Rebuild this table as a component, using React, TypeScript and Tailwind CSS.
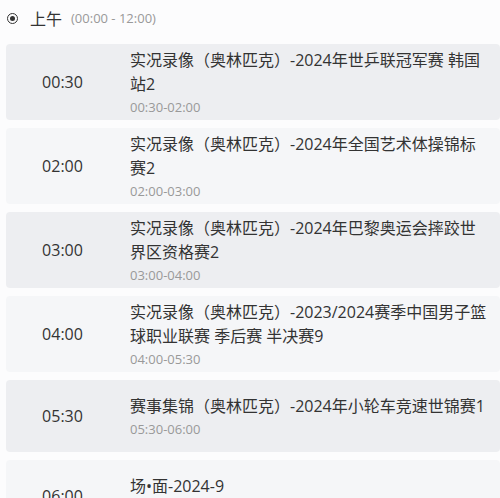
import React from 'react';

type Program = {
    time: string;
    title: string;
    range: string;
    shade: boolean;
};

const programs: Program[] = [
    { time: '00:30', title: '实况录像（奥林匹克）-2024年世乒联冠军赛 韩国站2', range: '00:30-02:00', shade: true },
    { time: '02:00', title: '实况录像（奥林匹克）-2024年全国艺术体操锦标赛2', range: '02:00-03:00', shade: false },
    { time: '03:00', title: '实况录像（奥林匹克）-2024年巴黎奥运会摔跤世界区资格赛2', range: '03:00-04:00', shade: true },
    { time: '04:00', title: '实况录像（奥林匹克）-2023/2024赛季中国男子篮球职业联赛 季后赛 半决赛9', range: '04:00-05:30', shade: false },
    { time: '05:30', title: '赛事集锦（奥林匹克）-2024年小轮车竞速世锦赛1', range: '05:30-06:00', shade: true },
    { time: '06:00', title: '场•面-2024-9', range: '06:00-06:30', shade: false },
];

export default function App() {
    return (
        <div className="w-[500px] h-[498px] overflow-hidden bg-[#fcfcfd] font-['Open_Sans','Noto_Sans_CJK_SC',sans-serif] text-[#333]">
            <div className="h-[36px] flex items-center pl-[7px] pt-[1px]">
                <span className="w-[11px] h-[11px] rounded-full border border-[#333] flex items-center justify-center">
                    <span className="w-[5px] h-[5px] rounded-full bg-[#333]" />
                </span>
                <span className="ml-[12px] text-[16px] leading-6">上午</span>
                <span className="ml-[9px] text-[13px] text-[#999]">(00:00 - 12:00)</span>
            </div>

            <div className="flex flex-col gap-2 pt-2 pl-[6px]">
                {programs.map((p) => (
                    <div
                        key={p.time}
                        className={`flex items-center min-h-[72px] py-[4px] rounded-[4px] ${p.shade ? 'bg-[#edeef1]' : 'bg-[#f5f6f8]'}`}
                    >
                        <div className="w-[113px] shrink-0 text-center text-[16px] leading-6">{p.time}</div>
                        <div className="flex-1 pl-[11px] pr-[11px]">
                            <div className="text-[16px] leading-6">{p.title}</div>
                            <div className="mt-[3px] text-[13px] leading-[17px] text-[#999]">{p.range}</div>
                        </div>
                    </div>
                ))}
            </div>
        </div>
    );
}
